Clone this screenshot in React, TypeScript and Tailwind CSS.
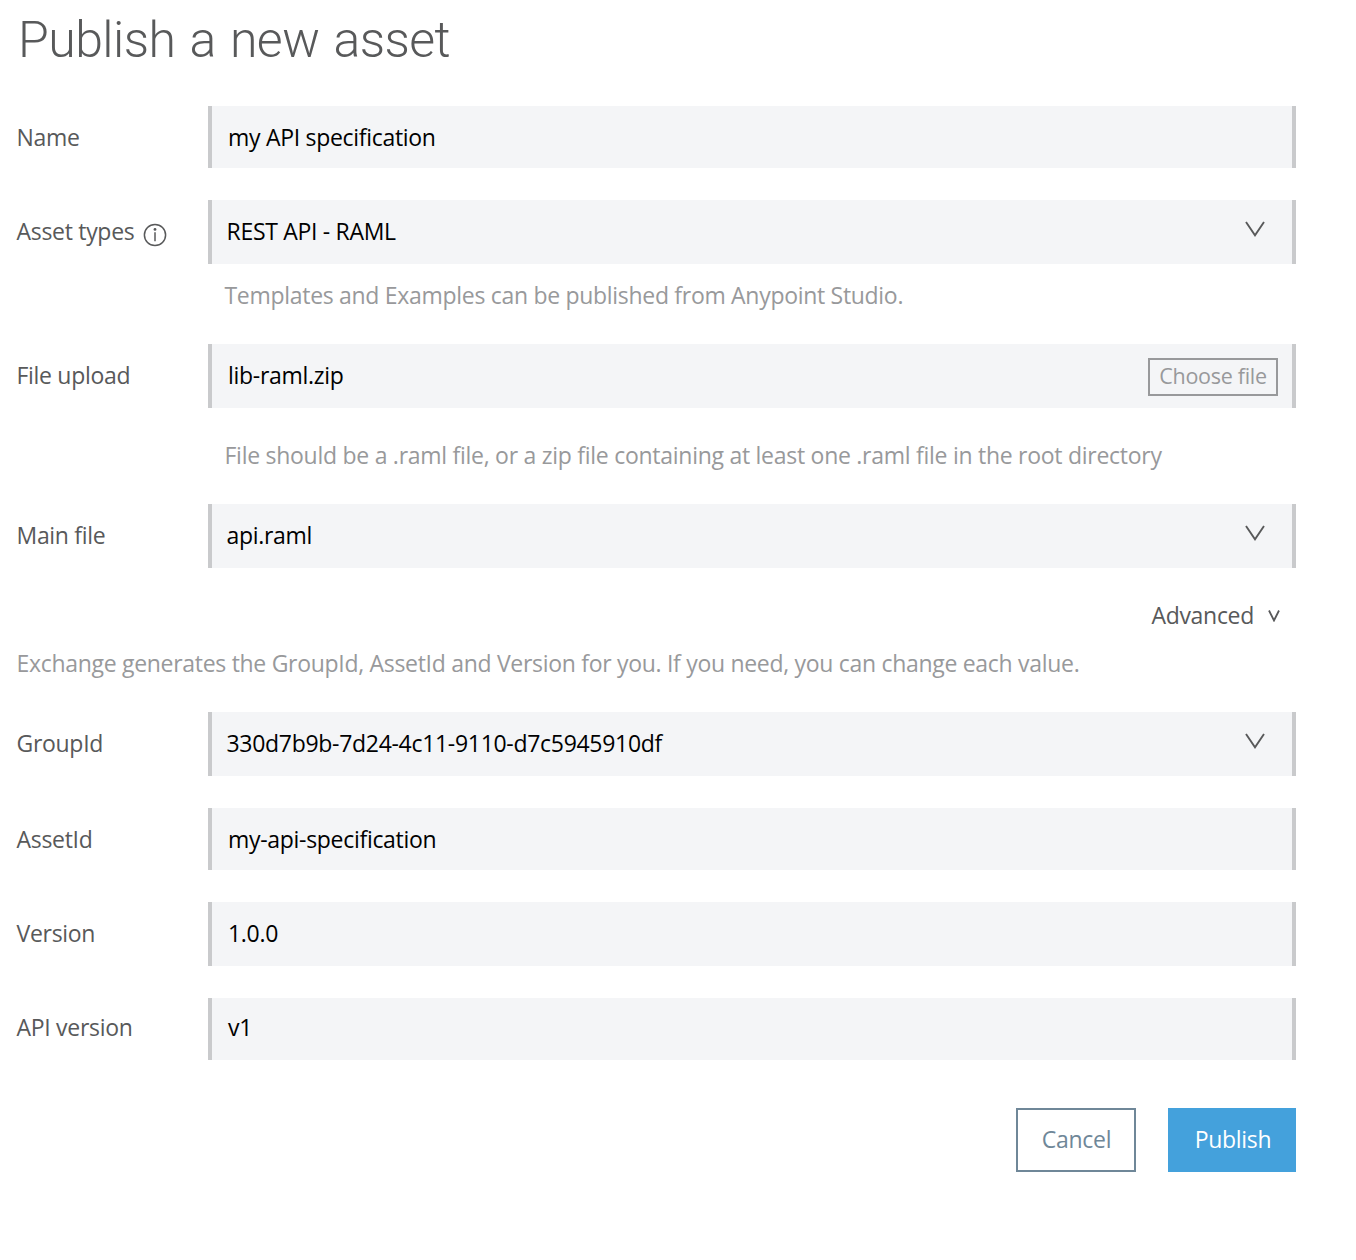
import React from 'react';

function Chevron({ small = false }: { small?: boolean }) {
  return small ? (
    <svg width="12" height="12" viewBox="0 0 12 12" fill="none" stroke="#58595a" strokeWidth="1.8">
      <path d="M1 0.5 L6 10.5 L11 0.5" />
    </svg>
  ) : (
    <svg width="20" height="16" viewBox="0 0 20 16" fill="none" stroke="#58595a" strokeWidth="1.9">
      <path d="M1 1 L10 14.2 L19 1" />
    </svg>
  );
}

type RowProps = {
  label: string;
  value: string;
  cls: string;
  labelCls?: string;
  valueCls?: string;
  select?: boolean;
  info?: boolean;
  children?: React.ReactNode;
};

function Row({ label, value, cls, labelCls = 'pb-0.5', valueCls = 'pb-0.5', select, info, children }: RowProps) {
  return (
    <div className={`flex ${cls}`}>
      <div className="flex h-16 w-[208px] shrink-0 items-center pl-[16.5px] text-[#58595a]">
        <span className={labelCls}>{label}</span>
        {info && (
          <svg className="mt-[6px] ml-[9px]" width="24" height="24" viewBox="0 0 24 24" fill="none" stroke="#58595a" strokeWidth="1.5">
            <circle cx="12" cy="12" r="10.6" />
            <path d="M12 9.3v9" />
            <circle cx="12" cy="6.4" r="1.4" fill="#58595a" stroke="none" />
          </svg>
        )}
      </div>
      <div className={`flex w-[1088px] items-center justify-between border-x-4 border-[#c9cacc] bg-[#f4f5f7] text-black ${select ? 'pl-[14.5px]' : 'pl-4'}`}>
        <span className={valueCls}>{value}</span>
        {select && (
          <span className="mr-[27px] mb-1.5">
            <Chevron />
          </span>
        )}
        {children}
      </div>
    </div>
  );
}

export default function App() {
  return (
    <div className="h-[1260px] w-[1356px] bg-white font-['Open_Sans',sans-serif] text-[23px] leading-8 tracking-[-0.3px] [font-variant-ligatures:common-ligatures]">
      <h1 className="h-[106px] pt-3 pl-[18px] font-['Roboto',sans-serif] text-[50px] leading-[56px] font-light tracking-[-0.55px] text-[#58595a] [word-spacing:2.5px]">Publish a new asset</h1>
      <Row cls="h-[62px]" label="Name" value="my API specification" valueCls="" />
      <Row cls="mt-8 h-16" label="Asset types" value="REST API - RAML" select info />
      <p className="h-20 pt-[15px] pl-[224.5px] text-[#98999b]">Templates and Examples can be published from Anypoint Studio.</p>
      <Row cls="h-16" label="File upload" value="lib-raml.zip">
        <button className="mt-0.5 mr-[14px] h-[38px] w-[130px] border-2 border-[#98999b] pb-0.5 text-[21.5px] leading-8 text-[#98999b]">Choose file</button>
      </Row>
      <p className="h-24 pt-[31px] pl-[224.5px] tracking-[-0.27px] text-[#98999b]">File should be a .raml file, or a zip file containing at least one .raml file in the root directory</p>
      <Row cls="h-16" label="Main file" value="api.raml" select />
      <div className="mt-8 flex h-8 w-[1280px] items-center justify-end gap-[14px] text-[#58595a]">
        <span className="pb-0.5">Advanced</span>
        <Chevron small />
      </div>
      <p className="h-16 pt-[15px] pl-[16.5px] text-[#98999b]">Exchange generates the GroupId, AssetId and Version for you. If you need, you can change each value.</p>
      <Row cls="mt-4 h-16" label="GroupId" value="330d7b9b-7d24-4c11-9110-d7c5945910df" select />
      <Row cls="mt-8 h-[62px]" label="AssetId" value="my-api-specification" valueCls="" />
      <Row cls="mt-8 h-16" label="Version" value="1.0.0" />
      <Row cls="mt-8 h-[62px]" label="API version" value="v1" labelCls="pb-1.5" valueCls="pb-1" />
      <div className="mt-12 flex w-[1296px] justify-end gap-8">
        <button className="h-16 w-[120px] border-2 border-[#6f8798] pb-0.5 pl-px text-[#6f8798]">Cancel</button>
        <button className="h-16 w-32 bg-[#44a1dc] pb-0.5 pl-0.5 text-white">Publish</button>
      </div>
    </div>
  );
}
